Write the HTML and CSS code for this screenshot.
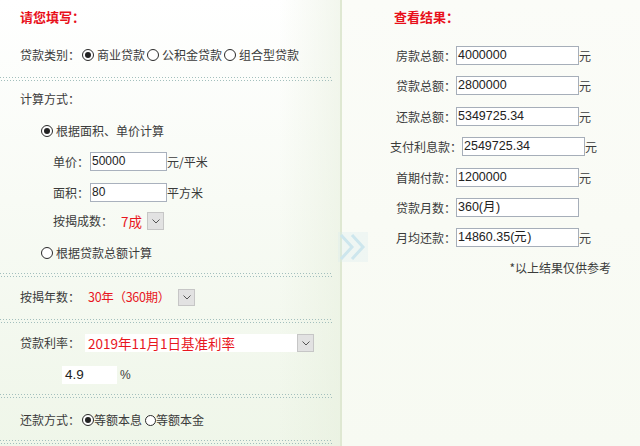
FILE: index.html
```html
<!DOCTYPE html>
<html lang="zh-CN">
<head>
<meta charset="utf-8">
<title>房贷计算器</title>
<link rel="stylesheet" href="styles.css">
</head>
<body>
<div class="left">
  <div class="title">请您填写：</div>
  <div class="row r-type">
    <span class="lbl">贷款类别：</span>
    <span class="radio on"></span><span class="opt">商业贷款</span>
    <span class="radio"></span><span class="opt">公积金贷款</span>
    <span class="radio"></span><span class="opt">组合型贷款</span>
  </div>
  <div class="dots d1"></div>

  <div class="row r-calc"><span class="lbl">计算方式：</span></div>
  <div class="row r-mode1"><span class="radio on"></span><span class="opt">根据面积、单价计算</span></div>
  <div class="row r-field r-price"><span class="lbl">单价：</span><span class="inp">50000</span><span class="unit">元/平米</span></div>
  <div class="row r-field r-area"><span class="lbl">面积：</span><span class="inp">80</span><span class="unit">平方米</span></div>
  <div class="row r-ratio"><span class="lbl">按揭成数：</span><span class="red v-ratio">7成</span><span class="sel"><svg width="8" height="5" viewBox="0 0 8 5"><path d="M0.5 0.5 L4 4 L7.5 0.5" fill="none" stroke="#555" stroke-width="1"/></svg></span></div>
  <div class="row r-mode2"><span class="radio"></span><span class="opt">根据贷款总额计算</span></div>
  <div class="dots d2"></div>

  <div class="row r-years"><span class="lbl">按揭年数：</span><span class="red v-years">30年（360期）</span><span class="sel"><svg width="8" height="5" viewBox="0 0 8 5"><path d="M0.5 0.5 L4 4 L7.5 0.5" fill="none" stroke="#555" stroke-width="1"/></svg></span></div>
  <div class="dots d3"></div>

  <div class="row r-rate"><span class="lbl">贷款利率：</span><span class="ratebox red">2019年11月1日基准利率</span><span class="sel"><svg width="8" height="5" viewBox="0 0 8 5"><path d="M0.5 0.5 L4 4 L7.5 0.5" fill="none" stroke="#555" stroke-width="1"/></svg></span></div>
  <div class="row r-pct"><span class="pctbox">4.9</span><span class="pct">%</span></div>
  <div class="dots d4"></div>

  <div class="row r-pay"><span class="lbl">还款方式：</span><span class="radio on tight"></span><span>等额本息</span><span class="radio tight sm"></span><span>等额本金</span></div>
  <div class="dots d5"></div>
</div>
<div class="sep"></div>
<div class="right">
  <div class="title rtitle">查看结果：</div>
  <div class="results">
    <div class="rrow"><span class="rlabel">房款总额：</span><span class="rinput">4000000</span><span class="unit2">元</span></div>
    <div class="rrow"><span class="rlabel">贷款总额：</span><span class="rinput">2800000</span><span class="unit2">元</span></div>
    <div class="rrow"><span class="rlabel">还款总额：</span><span class="rinput">5349725.34</span><span class="unit2">元</span></div>
    <div class="rrow"><span class="rlabel">支付利息款：</span><span class="rinput">2549725.34</span><span class="unit2">元</span></div>
    <div class="rrow"><span class="rlabel">首期付款：</span><span class="rinput">1200000</span><span class="unit2">元</span></div>
    <div class="rrow"><span class="rlabel">贷款月数：</span><span class="rinput">360(月)</span><span class="unit2"></span></div>
    <div class="rrow"><span class="rlabel">月均还款：</span><span class="rinput">14860.35(元)</span><span class="unit2">元</span></div>
  </div>
  <div class="note">*以上结果仅供参考</div>
</div>
<div class="chev">
  <svg width="30" height="30" viewBox="0 0 30 30">
    <path d="M3 3 L14 15 L3 27" fill="none" stroke="#cde6ed" stroke-width="3"/>
    <path d="M14 3 L25 15 L14 27" fill="none" stroke="#cde6ed" stroke-width="3"/>
  </svg>
</div>
</body>
</html>
```

FILE: styles.css
```css
* { box-sizing: border-box; }
html, body { margin: 0; padding: 0; }
body {
  width: 640px;
  height: 446px;
  overflow: hidden;
  display: flex;
  position: relative;
  font-family: "Noto Sans CJK SC", "Liberation Sans", sans-serif;
  font-size: 12px;
  color: #3b3b3b;
}
.left {
  width: 340px;
  height: 446px;
  padding-top: 7px;
  background:
    linear-gradient(to right, rgba(255,255,255,0) 82%, rgba(230,238,220,0.5) 100%),
    linear-gradient(to bottom, #ffffff 0%, #f8fbf5 45%, #eff6e9 100%);
}
.sep { width: 2px; height: 446px; background: #dfe8d2; }
.right {
  flex: 1;
  height: 446px;
  padding-top: 7px;
  background: linear-gradient(to bottom, #fbfcf8 0%, #f7faf2 100%);
}
.title {
  height: 20px;
  line-height: 20px;
  padding-left: 20px;
  color: #e8101a;
  font-weight: bold;
  font-size: 13px;
}
.rtitle { padding-left: 52px; }
.row {
  display: flex;
  align-items: center;
  height: 20px;
  line-height: 20px;
  white-space: nowrap;
  padding-left: 20px;
}
.red { color: #e8161e; font-size: 13.5px; }
.radio {
  width: 12px;
  height: 12px;
  border: 1.5px solid #2a2a2a;
  border-radius: 50%;
  background: #fff;
  margin: 0 3px 0 2px;
  display: flex;
  align-items: center;
  justify-content: center;
  flex: none;
}
.radio.on::after {
  content: "";
  width: 6px;
  height: 6px;
  border-radius: 50%;
  background: #222;
}
.radio.tight { margin: 0 0 0 2px; }
.radio.sm { margin-left: 3px; width: 11px; height: 11px; }
.dots {
  width: 333px;
  height: 4px;
  background-image:
    linear-gradient(to right, #a3bfbd 1px, transparent 1px),
    linear-gradient(to right, #a3bfbd 1px, transparent 1px);
  background-size: 3px 1px, 3px 1px;
  background-repeat: repeat-x, repeat-x;
  background-position: 0 0, 1px 3px;
}
.r-type { margin-top: 18px; }
.d1 { margin-top: 12px; }
.r-calc { margin-top: 8px; }
.r-mode1 { margin-top: 12px; padding-left: 39px; }
.r-field { height: 19px; padding-left: 53px; }
.r-price { margin-top: 11px; }
.r-area { margin-top: 12px; }
.inp {
  width: 77px;
  height: 19px;
  margin-left: 1px;
  border: 1px solid #a9b1bd;
  background: #fff;
  font-family: "Liberation Sans", sans-serif;
  font-size: 12px;
  line-height: 17px;
  padding-left: 1px;
  color: #222;
}
.r-ratio { margin-top: 9px; padding-left: 53px; }
.v-ratio { margin-left: 8px; }
.sel {
  width: 17px;
  height: 18px;
  background: #e2e2e2;
  border: 1px solid #c6c6c6;
  display: flex;
  align-items: center;
  justify-content: center;
  flex: none;
}
.r-ratio .sel { margin-left: 5px; }
.r-mode2 { margin-top: 12px; padding-left: 39px; }
.d2 { margin-top: 10px; }
.r-years { margin-top: 10px; }
.v-years { margin-left: 8px; font-size: 12.5px; letter-spacing: -0.3px; }
.r-years .sel { margin-left: 8px; height: 17px; }
.d3 { margin-top: 12px; }
.r-rate { margin-top: 10px; }
.ratebox {
  margin-left: 5px;
  width: 212px;
  height: 18px;
  line-height: 18px;
  background: #fff;
  padding-left: 3px;
}
.r-pct { margin-top: 12px; padding-left: 62px; }
.pctbox {
  width: 55px;
  height: 18px;
  line-height: 18px;
  background: #fff;
  padding-left: 3px;
  font-family: "Liberation Sans", sans-serif;
  font-size: 13.5px;
  color: #222;
}
.pct { margin-left: 3px; font-family: "Liberation Sans", sans-serif; font-size: 12px; }
.d4 { margin-top: 9px; }
.r-pay { margin-top: 12px; }
.d5 { margin-top: 10px; }

.results {
  margin-top: 19px;
  padding-left: 6px;
  display: flex;
  flex-direction: column;
  align-items: center;
  gap: 11.4px;
}
.rrow {
  display: flex;
  align-items: center;
  height: 19px;
  white-space: nowrap;
}
.rinput {
  width: 123px;
  height: 19px;
  border: 1px solid #a6aeb9;
  background: #fff;
  font-family: "Liberation Sans", sans-serif;
  font-size: 12.5px;
  line-height: 17px;
  padding-left: 1px;
  color: #222;
}
.unit2 { width: 13px; }
.note {
  margin-top: 11px;
  height: 20px;
  line-height: 20px;
  text-align: right;
  padding-right: 29px;
}
.chev {
  position: absolute;
  left: 338px;
  top: 232px;
  width: 30px;
  height: 30px;
  background: rgba(214, 234, 238, 0.3);
}
.chev svg { display: block; }
```
